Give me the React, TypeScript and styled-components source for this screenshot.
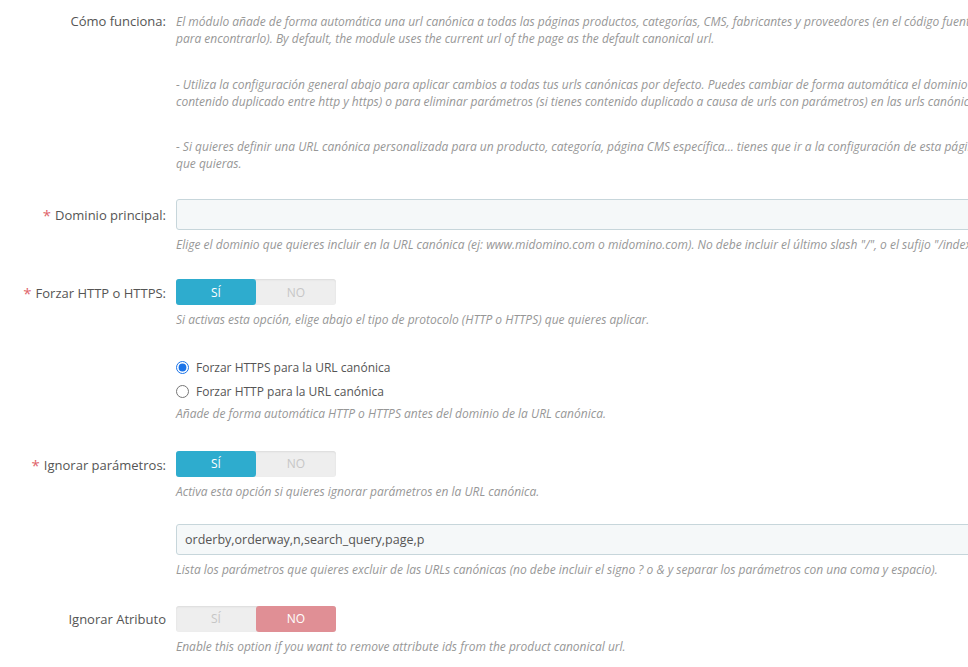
import React from "react";
import styled, { createGlobalStyle } from "styled-components";

const GlobalStyle = createGlobalStyle`
  html, body {
    margin: 0;
    padding: 0;
    background: #fff;
    overflow: hidden;
  }
  body {
    font-family: "Open Sans", "Liberation Sans", sans-serif;
    color: #555;
  }
`;

const Form = styled.div`
  width: 1200px;
  padding-top: 13px;
`;

const Group = styled.div<{ $gap?: number }>`
  display: grid;
  grid-template-columns: 166px 1fr;
  column-gap: 10px;
  margin-bottom: ${(p) => (p.$gap ?? 26)}px;
`;

const Label = styled.div<{ $lh: number; $required?: boolean }>`
  font-size: 13px;
  line-height: ${(p) => p.$lh}px;
  height: ${(p) => p.$lh}px;
  text-align: right;
  white-space: nowrap;
  color: #555;

  ${(p) =>
    p.$required &&
    `
    &:before {
      content: "*";
      color: #e0656b;
      font-size: 15px;
      margin-right: 4px;
      position: relative;
      top: 1px;
    }
  `}
`;

const Control = styled.div`
  display: flex;
  flex-direction: column;
  align-items: flex-start;
`;

const Help = styled.p<{ $top?: number }>`
  margin: ${(p) => p.$top ?? 6}px 0 0;
  font-size: 12px;
  line-height: 17px;
  font-style: italic;
  color: #979797;
  white-space: nowrap;
`;

const Note = styled(Help)`
  margin: 0 0 28.5px;
  &:last-child {
    margin-bottom: 0;
  }
`;

const TextInput = styled.input`
  box-sizing: border-box;
  width: 900px;
  height: 31px;
  padding: 0 8px;
  font-family: inherit;
  font-size: 12.5px;
  color: #555;
  background: #f5f8f9;
  border: 1px solid #c7d6db;
  border-radius: 3px;
  outline: none;
`;

const Switch = styled.div`
  display: flex;
  width: 160px;
  height: 26px;
  border-radius: 3px;
  background: #eee;
  box-shadow: inset 0 1px 2px rgba(0, 0, 0, 0.08);
`;

const SwitchSide = styled.span<{ $on?: boolean; $tone?: "yes" | "no" }>`
  flex: 1;
  display: flex;
  align-items: center;
  justify-content: center;
  font-size: 12px;
  border-radius: 3px;
  color: ${(p) => (p.$on ? "#fff" : "#c6c6c6")};
  background: ${(p) =>
    p.$on ? (p.$tone === "no" ? "#e08f95" : "#2eacce") : "transparent"};
`;

const RadioRow = styled.label`
  display: flex;
  align-items: center;
  height: 24px;
  font-size: 12px;
  color: #555;
  gap: 7px;

  input {
    margin: 0;
    width: 13px;
    height: 13px;
    accent-color: #1a73e8;
  }
`;

type YesNoProps = { value: boolean };

const YesNo = ({ value }: YesNoProps) => (
  <Switch>
    <SwitchSide $on={value} $tone="yes">SÍ</SwitchSide>
    <SwitchSide $on={!value} $tone="no">NO</SwitchSide>
  </Switch>
);

export default function App() {
  return (
    <>
      <GlobalStyle />
      <Form>
        <Group $gap={26.5}>
          <Label $lh={17}>Cómo funciona:</Label>
          <Control>
            <Note>
              El módulo añade de forma automática una url canónica a todas las páginas productos, categorías, CMS, fabricantes y proveedores (en el código fuente puedes buscar rel="canonical"
              <br />
              para encontrarlo). By default, the module uses the current url of the page as the default canonical url.
            </Note>
            <Note>
              - Utiliza la configuración general abajo para aplicar cambios a todas tus urls canónicas por defecto. Puedes cambiar de forma automática el dominio o el protocolo (si tienes
              <br />
              contenido duplicado entre http y https) o para eliminar parámetros (si tienes contenido duplicado a causa de urls con parámetros) en las urls canónicas.
            </Note>
            <Note>
              - Si quieres definir una URL canónica personalizada para un producto, categoría, página CMS específica... tienes que ir a la configuración de esta página y definir la URL
              <br />
              que quieras.
            </Note>
          </Control>
        </Group>

        <Group $gap={26.5}>
          <Label $lh={31} $required>Dominio principal:</Label>
          <Control>
            <TextInput defaultValue="" />
            <Help>
              Elige el dominio que quieres incluir en la URL canónica (ej: www.midomino.com o midomino.com). No debe incluir el último slash "/", o el sufijo "/index.php".
            </Help>
          </Control>
        </Group>

        <Group $gap={27.5}>
          <Label $lh={26} $required>Forzar HTTP o HTTPS:</Label>
          <Control>
            <YesNo value={true} />
            <Help>Si activas esta opción, elige abajo el tipo de protocolo (HTTP o HTTPS) que quieres aplicar.</Help>
          </Control>
        </Group>

        <Group $gap={28.5}>
          <Label $lh={24} />
          <Control>
            <RadioRow>
              <input type="radio" name="proto" defaultChecked />
              Forzar HTTPS para la URL canónica
            </RadioRow>
            <RadioRow>
              <input type="radio" name="proto" />
              Forzar HTTP para la URL canónica
            </RadioRow>
            <Help $top={1.5}>Añade de forma automática HTTP o HTTPS antes del dominio de la URL canónica.</Help>
          </Control>
        </Group>

        <Group $gap={24.5}>
          <Label $lh={26} $required>Ignorar parámetros:</Label>
          <Control>
            <YesNo value={true} />
            <Help>Activa esta opción si quieres ignorar parámetros en la URL canónica.</Help>
          </Control>
        </Group>

        <Group $gap={27.5}>
          <Label $lh={31} />
          <Control>
            <TextInput defaultValue="orderby,orderway,n,search_query,page,p" />
            <Help>
              Lista los parámetros que quieres excluir de las URLs canónicas (no debe incluir el signo ? o &amp; y separar los parámetros con una coma y espacio).
            </Help>
          </Control>
        </Group>

        <Group>
          <Label $lh={26}>Ignorar Atributo</Label>
          <Control>
            <YesNo value={false} />
            <Help>Enable this option if you want to remove attribute ids from the product canonical url.</Help>
          </Control>
        </Group>
      </Form>
    </>
  );
}
